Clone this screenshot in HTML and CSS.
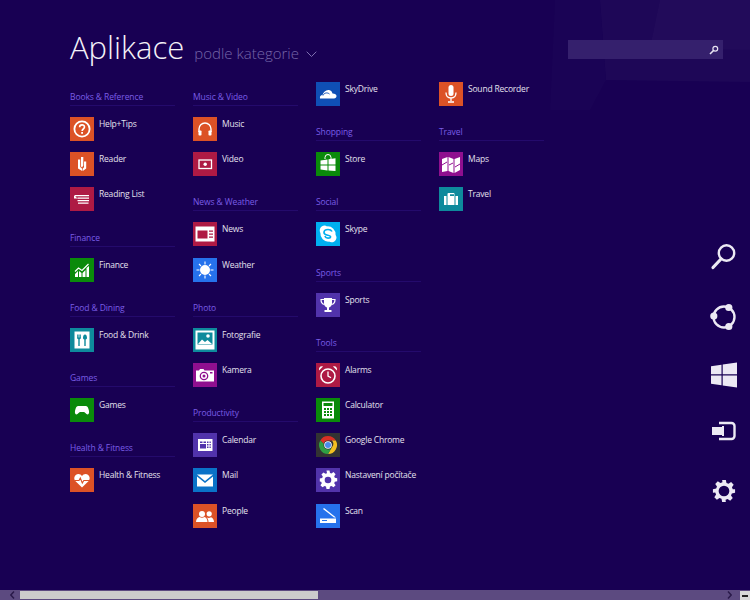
FILE: index.html
```html
<!DOCTYPE html>
<html lang="cs">
<head>
    <meta charset="UTF-8">
    <title>Aplikace</title>
    <link rel="stylesheet" href="styles.css">
</head>
<body>
<!--pozadi: jemne svetlejsi plochy vpravo nahore-->
<svg class="backdrop" width="750" height="110" viewBox="0 0 750 110">
    <polygon points="600,0 750,0 750,82 606,80" fill="#fff" opacity=".028"/>
    <polygon points="660,0 750,0 750,50 650,48" fill="#fff" opacity=".018"/>
    <polygon points="555,0 600,0 606,80 590,110 550,110" fill="#fff" opacity=".01"/>
</svg>

<header class="top">
    <h1 class="title">Aplikace</h1>
    <span class="sort">podle kategorie</span>
    <svg class="chevron" width="11" height="7" viewBox="0 0 11 7"><path d="M.7.7 5.500 5.500 10.300.7" fill="none" stroke="#7e6fb0" stroke-width="1"/></svg>
    <div class="search">
        <svg width="10" height="10" viewBox="0 0 10 10"><circle cx="6.300" cy="3.700" r="2.400" fill="none" stroke="#e8e4f2" stroke-width="1.200"/><path d="M4.500 5.500 1 9" stroke="#e8e4f2" stroke-width="1.600"/></svg>
    </div>
</header>

<main class="columns">
    <div class="column first">
        <h2 class="group">Books &amp; Reference</h2>
        <div class="app"><span class="tile orange"><svg viewBox="0 0 24 24"><circle cx="12" cy="12" r="7.600" fill="none" stroke="#fff" stroke-width="1.800"/><path d="M9.600 10.200c0-3.100 4.900-3.100 4.900-.1 0 1.900-2.400 1.900-2.400 3.800" fill="none" stroke="#fff" stroke-width="1.600"/><rect x="11.200" y="15" width="1.800" height="1.800" fill="#fff"/></svg></span><span class="name">Help+Tips</span></div>
        <div class="app"><span class="tile orange"><svg viewBox="0 0 24 24"><path d="M8 7.500h2.200v7.500l2 1.700V19l-4.200-2.600zM11 5h2.300v8.500L12 15.500l-1-1zM14 9.500h2.200v7L12.800 19v-2.600L14 15.300z" fill="#fff"/></svg></span><span class="name">Reader</span></div>
        <div class="app"><span class="tile crimson"><svg viewBox="0 0 24 24"><path d="M5 8h14v1.300H5zM7.500 10.500H19v1.200H7.500zM7.500 13H19v1.200H7.500zM8 15.500h10.500v1.200H8zM4 8l3.500 3.500H4z" fill="#fff"/></svg></span><span class="name">Reading List</span></div>

        <h2 class="group">Finance</h2>
        <div class="app"><span class="tile green"><svg viewBox="0 0 24 24"><path d="M5 19v-3l3-3v6zM9 19v-6l2.500 2v4zM12.500 19v-4l3-3v7zM16.500 19v-9l2.500-2v11z" fill="#fff"/><path d="m5 13.500 3.500-3.500L12 12.500 18.500 6" fill="none" stroke="#fff" stroke-width="1.200"/></svg></span><span class="name">Finance</span></div>

        <h2 class="group">Food &amp; Dining</h2>
        <div class="app"><span class="tile teal"><svg viewBox="0 0 24 24"><path d="M4.500 3.500h15v17h-15z" fill="#fff"/><path d="M7 6.500v3c0 1 .7 1.600 1.300 1.800V18h1.400v-6.700c.6-.2 1.300-.8 1.300-1.800v-3h-.8v3H9.600v-3H8.400v3h-.6v-3zM15 6.500c-1.300 0-2 1.800-2 3.300 0 1 .5 1.500 1.300 1.700V18h1.400v-6.500c.8-.2 1.300-.7 1.300-1.700 0-1.500-.7-3.300-2-3.300z" fill="#0e8a9c"/></svg></span><span class="name">Food &amp; Drink</span></div>

        <h2 class="group">Games</h2>
        <div class="app"><span class="tile green"><svg viewBox="0 0 24 24"><path d="M8 8h8c1.700 0 2.500 2.500 3 5 .4 2-.4 3.500-1.500 3.500-1.400 0-2.300-2.500-3.500-2.500h-4c-1.200 0-2.100 2.500-3.500 2.500C5.400 16.500 4.600 15 5 13c.5-2.500 1.300-5 3-5z" fill="#fff"/></svg></span><span class="name">Games</span></div>

        <h2 class="group">Health &amp; Fitness</h2>
        <div class="app"><span class="tile orange"><svg viewBox="0 0 24 24"><path d="M12 19.500 5.300 13C3 10 5 6 8.300 6c1.600 0 2.900.9 3.700 2.100C12.800 6.900 14.100 6 15.700 6 19 6 21 10 18.700 13z" fill="#fff"/><path d="M5 12.500h4l1.300-2.500 2 5 1.500-2.500H20" fill="none" stroke="#dc5226" stroke-width="1.100"/></svg></span><span class="name">Health &amp; Fitness</span></div>
    </div>

    <div class="column first">
        <h2 class="group">Music &amp; Video</h2>
        <div class="app"><span class="tile orange"><svg viewBox="0 0 24 24"><path d="M6 15v-3a6 6 0 0 1 12 0v3" fill="none" stroke="#fff" stroke-width="1.400"/><rect x="5.500" y="13.500" width="3" height="5" rx=".8" fill="#fff"/><rect x="15.500" y="13.500" width="3" height="5" rx=".8" fill="#fff"/></svg></span><span class="name">Music</span></div>
        <div class="app"><span class="tile crimson"><svg viewBox="0 0 24 24"><rect x="6" y="8" width="12.500" height="8.500" fill="none" stroke="#fff" stroke-width="1.300"/><circle cx="12.200" cy="12.200" r="1.700" fill="#fff"/></svg></span><span class="name">Video</span></div>

        <h2 class="group">News &amp; Weather</h2>
        <div class="app"><span class="tile crimson"><svg viewBox="0 0 24 24"><path d="M2.500 4.500h19v15h-19z" fill="#fff"/><path d="M4.500 8.500h10v8h-10zM16 8.500h4v1.200h-4zM16 11.500h4v1.200h-4zM16 14.500h4v1.200h-4z" fill="#ae1a44"/></svg></span><span class="name">News</span></div>
        <div class="app"><span class="tile blue"><svg viewBox="0 0 24 24"><circle cx="12" cy="12" r="5" fill="#fff"/><path d="M12 3.500v3M12 17.500v3M3.500 12h3M17.500 12h3M6 6l2 2M16 16l2 2M18 6l-2 2M8 16l-2 2" stroke="#fff" stroke-width="1.100"/></svg></span><span class="name">Weather</span></div>

        <h2 class="group">Photo</h2>
        <div class="app"><span class="tile teal"><svg viewBox="0 0 24 24"><path d="M2.500 2.500h19v19h-19zM4.500 4.500v12h15v-12z" fill="#fff" fill-rule="evenodd"/><path d="m5 16 4-4.500 3 2.500 2.500-2 4.500 4z" fill="#fff"/><circle cx="15" cy="8" r="1.800" fill="#fff"/></svg></span><span class="name">Fotografie</span></div>
        <div class="app"><span class="tile magenta"><svg viewBox="0 0 24 24"><path d="M3 7.500h3l1-1.500h3.500l1 1.500H21v11H3z" fill="#fff"/><circle cx="11" cy="13" r="3.700" fill="none" stroke="#8f0f8f" stroke-width="1.300"/><circle cx="11" cy="13" r="1.500" fill="#8f0f8f"/><rect x="17" y="9" width="2.500" height="1.500" fill="#8f0f8f"/></svg></span><span class="name">Kamera</span></div>

        <h2 class="group">Productivity</h2>
        <div class="app"><span class="tile purple"><svg viewBox="0 0 24 24"><path d="M5 6h14.500v12H5z" fill="#fff"/><path d="M7 8.500h2.500V10H7zM10.500 8.500H13V10h-2.500zM14 8.500h1.500V10H14zM16.500 8.500h1.300V10h-1.300zM7 11h6v4.500H7zM14 11h1.500v1.500H14zM16.500 11h1.300v1.500h-1.300zM14 13.500h1.500V15H14zM16.500 13.500h1.300V15h-1.300z" fill="#5133ab"/></svg></span><span class="name">Calendar</span></div>
        <div class="app"><span class="tile mail"><svg viewBox="0 0 24 24"><path d="M4 6.500h16L12 13zM4 8.500l8 6.500 8-6.500v10H4z" fill="#fff"/></svg></span><span class="name">Mail</span></div>
        <div class="app"><span class="tile orange"><svg viewBox="0 0 24 24"><circle cx="9" cy="10" r="3" fill="#fff"/><circle cx="16.200" cy="9.800" r="2.600" fill="#fff"/><path d="M3 18c0-3 2-4.500 3.500-5 1.500 1 3.500 1 5 0 1.500.5 3 2 3 5zM15.500 18c0-2-.7-3.500-1.800-4.500 1.400.6 3 .6 4.300-.3 1.300.5 3 2 3 4.800z" fill="#fff"/></svg></span><span class="name">People</span></div>
    </div>

    <div class="column">
        <div class="app"><span class="tile navy"><svg viewBox="0 0 24 24"><path d="M4 16.500c-.5-2 .8-3.500 2.500-3.500C7.500 10 10 7.500 13 8c1.800.3 3 1.500 3.500 3.500 2.500 0 4 1 4 2.500s-1 2.500-2.500 2.500z" fill="#fff"/><path d="M7 13.500c1-2.500 4-3.500 6.500-1.500" fill="none" stroke="#0f4fb5" stroke-width="1"/></svg></span><span class="name">SkyDrive</span></div>

        <h2 class="group">Shopping</h2>
        <div class="app"><span class="tile green"><svg viewBox="0 0 24 24"><path d="M9 7V5.500a3 3 0 0 1 6 0V7" fill="none" stroke="#fff" stroke-width="1"/><path d="M4.500 8.500 11.500 7.500V12.500h-7zM12.500 7.300l7-1V12.500h-7zM4.500 13.500h7V18.500l-7-1zM12.500 13.500h7V19l-7-.5z" fill="#fff"/></svg></span><span class="name">Store</span></div>

        <h2 class="group">Social</h2>
        <div class="app"><span class="tile skype"><svg viewBox="0 0 24 24"><path d="M8.500 3.500c1 0 1.800.4 2.500.9a8 8 0 0 1 8.600 8.600c.5.700.9 1.500.9 2.500a5 5 0 0 1-7.500 4.100 8 8 0 0 1-8.600-8.600 5 5 0 0 1 4.100-7.500z" fill="#fff"/><path d="M16 9.500c-.7-1.500-2.200-2-4-2-2.300 0-4 1-4 3 0 3.700 6.500 2 6.500 4.300 0 1-1.200 1.400-2.500 1.400-1.500 0-2.500-.6-3.200-2" fill="none" stroke="#00aff0" stroke-width="1.700"/></svg></span><span class="name">Skype</span></div>

        <h2 class="group">Sports</h2>
        <div class="app"><span class="tile purple"><svg viewBox="0 0 24 24"><path d="M8 5h8v5.500c0 2-1.500 3.500-3 4V17h2.500v2h-7v-2H11v-2.500c-1.500-.5-3-2-3-4z" fill="#fff"/><path d="M8 6.500H5c0 3 1 4.500 3.500 5M16 6.500h3c0 3-1 4.500-3.500 5" fill="none" stroke="#fff" stroke-width="1.200"/></svg></span><span class="name">Sports</span></div>

        <h2 class="group">Tools</h2>
        <div class="app"><span class="tile crimson"><svg viewBox="0 0 24 24"><circle cx="12" cy="13" r="7" fill="none" stroke="#fff" stroke-width="1.600"/><path d="M12 8.500V13l3 1.700" fill="none" stroke="#fff" stroke-width="1.300"/><path d="M3 7.500 7 3.500C4.500 2.500 2.500 4.500 3 7.500zM21 7.500l-4-4c2.500-1 4.500 1 4 4z" fill="#fff"/></svg></span><span class="name">Alarms</span></div>
        <div class="app"><span class="tile green"><svg viewBox="0 0 24 24"><path d="M6 3.500h12v17H6zM7.500 5v3h9V5zM8 10v2h2v-2zM11 10v2h2v-2zM14 10v2h2v-2zM8 13v2h2v-2zM11 13v2h2v-2zM14 13v2h2v-2zM8 16v2h2v-2zM11 16v2h2v-2zM14 16v2h2v-2z" fill="#fff" fill-rule="evenodd"/></svg></span><span class="name">Calculator</span></div>
        <div class="app"><span class="tile chrome"><svg viewBox="0 0 24 24"><path d="M12 3a9 9 0 0 1 7.800 4.500H12a4.500 4.500 0 0 0-4.300 3.200L4.300 7.400A9 9 0 0 1 12 3z" fill="#d93025"/><path d="M19.800 7.500A9 9 0 0 1 12 21l3.900-6.800a4.500 4.500 0 0 0 0-6.700z" fill="#f2c021"/><path d="M12 21A9 9 0 0 1 4.300 7.400l3.400 3.300a4.500 4.500 0 0 0 4.300 5.800c1.500 0 2.900-.8 3.900-2.300L12 21z" fill="#2f9e44"/><circle cx="12" cy="12" r="3.800" fill="#fff"/><circle cx="12" cy="12" r="3" fill="#4a8bea"/></svg></span><span class="name">Google Chrome</span></div>
        <div class="app"><span class="tile purple"><svg viewBox="0 0 24 24"><path d="M10.500 4h3l.5 2.400 1.500.6 2-1.400 2.100 2.100-1.400 2 .6 1.500 2.400.5v3l-2.400.5-.6 1.500 1.400 2-2.100 2.100-2-1.400-1.500.6-.5 2.400h-3l-.5-2.400-1.500-.6-2 1.400-2.100-2.100 1.400-2-.6-1.500L3.800 15v-3l2.400-.5.6-1.500-1.400-2 2.100-2.100 2 1.400 1.500-.6z" transform="translate(0 -1.500)" fill="#fff"/><circle cx="12" cy="12" r="3.300" fill="#5133ab"/></svg></span><span class="name">Nastavení počítače</span></div>
        <div class="app"><span class="tile blue"><svg viewBox="0 0 24 24"><path d="m8 4 12 9.500h-2L7 5zM4 14.500h16V19H4z" fill="#fff"/><rect x="6" y="16" width="5" height="1" fill="#2672ec"/></svg></span><span class="name">Scan</span></div>
    </div>

    <div class="column">
        <div class="app"><span class="tile orange"><svg viewBox="0 0 24 24"><rect x="9.500" y="3" width="5" height="11" rx="2.500" fill="#fff"/><path d="M7 10.500c0 3.500 2 5.500 5 5.500s5-2 5-5.500M12 16v3M9 20h6" fill="none" stroke="#fff" stroke-width="1.300"/></svg></span><span class="name">Sound Recorder</span></div>

        <h2 class="group">Travel</h2>
        <div class="app"><span class="tile magenta"><svg viewBox="0 0 24 24"><path d="M3 7l5.500-2v14L3 20zM9.500 5l5 2v14l-5-2zM15.500 7l5.500-2v13l-5.500 3z" fill="#fff"/><path d="M3 13l5-3M10 13l4-2M16 15l5-3" stroke="#8f0f8f" stroke-width="1"/></svg></span><span class="name">Maps</span></div>
        <div class="app"><span class="tile teal"><svg viewBox="0 0 24 24"><path d="M5 9h2.500v9H5zM8.500 9V7a1 1 0 0 1 1-1h5a1 1 0 0 1 1 1v2h3v9h-2V9h-.5V7.200h-5V9h-.5v9h-2zM8.500 9h7v9h-7zM16.500 9H19v9h-2.500z" fill="#fff"/></svg></span><span class="name">Travel</span></div>
    </div>
</main>

<!--charms-->
<nav class="charms">
    <svg width="28" height="30" viewBox="0 0 28 30"><circle cx="16.500" cy="11" r="7.700" fill="none" stroke="#ece9f4" stroke-width="2.400"/><path d="M11 17 3 25.500" stroke="#ece9f4" stroke-width="3.200" stroke-linecap="round"/></svg>
    <svg width="28" height="28" viewBox="0 0 28 28"><circle cx="14" cy="14" r="10.500" fill="none" stroke="#ece9f4" stroke-width="2.400"/><circle cx="18.800" cy="4.500" r="3.600" fill="#ece9f4"/><circle cx="3.800" cy="13" r="3.600" fill="#ece9f4"/><circle cx="18.800" cy="23.500" r="3.600" fill="#ece9f4"/></svg>
    <svg width="26" height="26" viewBox="0 0 26 26"><path d="M0 4.300 10.500 2.800V12.300H0zM11.700 2.600 26 .5V12.300H11.700zM0 13.500H10.500V23.300L0 21.800zM11.700 13.500H26V25.500L11.700 23.500z" fill="#ece9f4"/></svg>
    <svg class="device" width="24" height="22" viewBox="0 0 24 22"><path d="M7 3h12.500a3 3 0 0 1 3 3v10a3 3 0 0 1-3 3H7" fill="none" stroke="#ece9f4" stroke-width="2.400"/><path d="M0 7h11v8H0z" fill="#ece9f4"/><path d="M11 6v10" stroke="#ece9f4" stroke-width="2"/></svg>
    <svg class="gear" width="24" height="24" viewBox="0 0 26 26"><path d="M11 1h4l.7 3.300 2.200.9 2.800-1.900 2.800 2.800-1.900 2.800.9 2.200L25 11v4l-3.500.7-.9 2.200 1.900 2.800-2.800 2.800-2.800-1.900-2.200.9L15 25h-4l-.7-3.500-2.200-.9-2.800 1.900-2.800-2.800 1.900-2.800-.9-2.200L1 15v-4l3.500-.7.900-2.200-1.900-2.800 2.800-2.800 2.800 1.900 2.200-.9z" fill="#ece9f4"/><circle cx="13" cy="13" r="5.800" fill="#180053"/></svg>
</nav>

<footer class="scrollbar">
    <svg class="arrow" width="5" height="8" viewBox="0 0 5 8"><path d="M4 .5.800 4 4 7.500" fill="none" stroke="#2a1a4a" stroke-width="1.500"/></svg>
    <div class="thumb"></div>
    <svg class="arrow right" width="5" height="8" viewBox="0 0 5 8"><path d="M1 .5 4.200 4 1 7.500" fill="none" stroke="#2a1a4a" stroke-width="1.500"/></svg>
    <div class="zoom"><span></span></div>
</footer>
</body>
</html>
```

FILE: styles.css
```css
* {
    margin: 0;
    padding: 0;
    box-sizing: border-box;
}
html, body {
    height: 100%;
}
body {
    position: relative;
    display: flex;
    flex-direction: column;
    overflow: hidden;
    background: #180053;
    color: #e4e1ee;
    font-family: "Open Sans", "Liberation Sans", sans-serif;
}
.backdrop {
    position: absolute;
    top: 0;
    left: 0;
}

/* hlavicka */
.top {
    position: relative;
    display: flex;
    align-items: flex-start;
    height: 82px;
    padding-left: 70px;
}
.title {
    margin-top: 25px;
    font-size: 31px;
    font-weight: 300;
    line-height: 44px;
    color: #f4f2f8;
}
.sort {
    margin: 43px 0 0 10px;
    font-size: 15px;
    font-weight: 300;
    line-height: 20px;
    color: #7566a8;
}
.chevron {
    margin: 51px 0 0 7px;
}
.search {
    display: flex;
    align-items: center;
    justify-content: flex-end;
    width: 155px;
    height: 19px;
    margin: 40px 27px 0 auto;
    padding-right: 4px;
    background: #35206d;
}

/* sloupce aplikaci */
.columns {
    position: relative;
    display: flex;
    flex: 1;
    padding-left: 70px;
}
.column {
    width: 123px;
}
.first {
    padding-top: 5px;
}
.group {
    width: 105px;
    height: 30px;
    padding-top: 4px;
    font-size: 8.5px;
    font-weight: 400;
    line-height: 12px;
    letter-spacing: -.1px;
    color: #7a5de6;
    background: linear-gradient(#240a6c, #240a6c) no-repeat 0 18px / 100% 1px;
}
.app + .group {
    margin-top: 5px;
}
.app {
    display: flex;
    align-items: flex-start;
    height: 35.2px;
}
.tile {
    flex: none;
    width: 24px;
    height: 24px;
}
.tile svg {
    display: block;
    width: 24px;
    height: 24px;
}
.name {
    margin-left: 5px;
    font-size: 8.5px;
    line-height: 13px;
    letter-spacing: -.2px;
}
.orange { background: #dc5226; }
.crimson { background: #ae1a44; }
.green { background: #0a8a0a; }
.teal { background: #0e8a9c; }
.blue { background: #2672ec; }
.magenta { background: #8f0f8f; }
.purple { background: #5133ab; }
.navy { background: #0f4fb5; }
.mail { background: #0a72c8; }
.skype { background: #00aff0; }
.chrome { background: #333; }

/* charms lista */
.charms {
    position: absolute;
    top: 242px;
    right: 12px;
    display: flex;
    flex-direction: column;
    align-items: center;
    gap: 31px;
    width: 28px;
}
.device {
    margin-top: 1px;
}
.gear {
    margin-top: 6px;
}

/* posuvnik */
.scrollbar {
    position: relative;
    display: flex;
    align-items: center;
    flex: none;
    height: 10px;
    background: #5c4a80;
}
.arrow {
    flex: none;
    margin-left: 10px;
}
.thumb {
    flex: none;
    width: 298px;
    height: 8px;
    margin-left: 5px;
    background: #cccccc;
}
.arrow.right {
    margin-left: auto;
}
.zoom {
    display: flex;
    align-items: center;
    justify-content: center;
    flex: none;
    width: 10px;
    height: 9px;
    margin: 1px 0 0 8px;
    background: #d8d8d8;
}
.zoom span {
    width: 6px;
    height: 2px;
    background: #222;
}
```
